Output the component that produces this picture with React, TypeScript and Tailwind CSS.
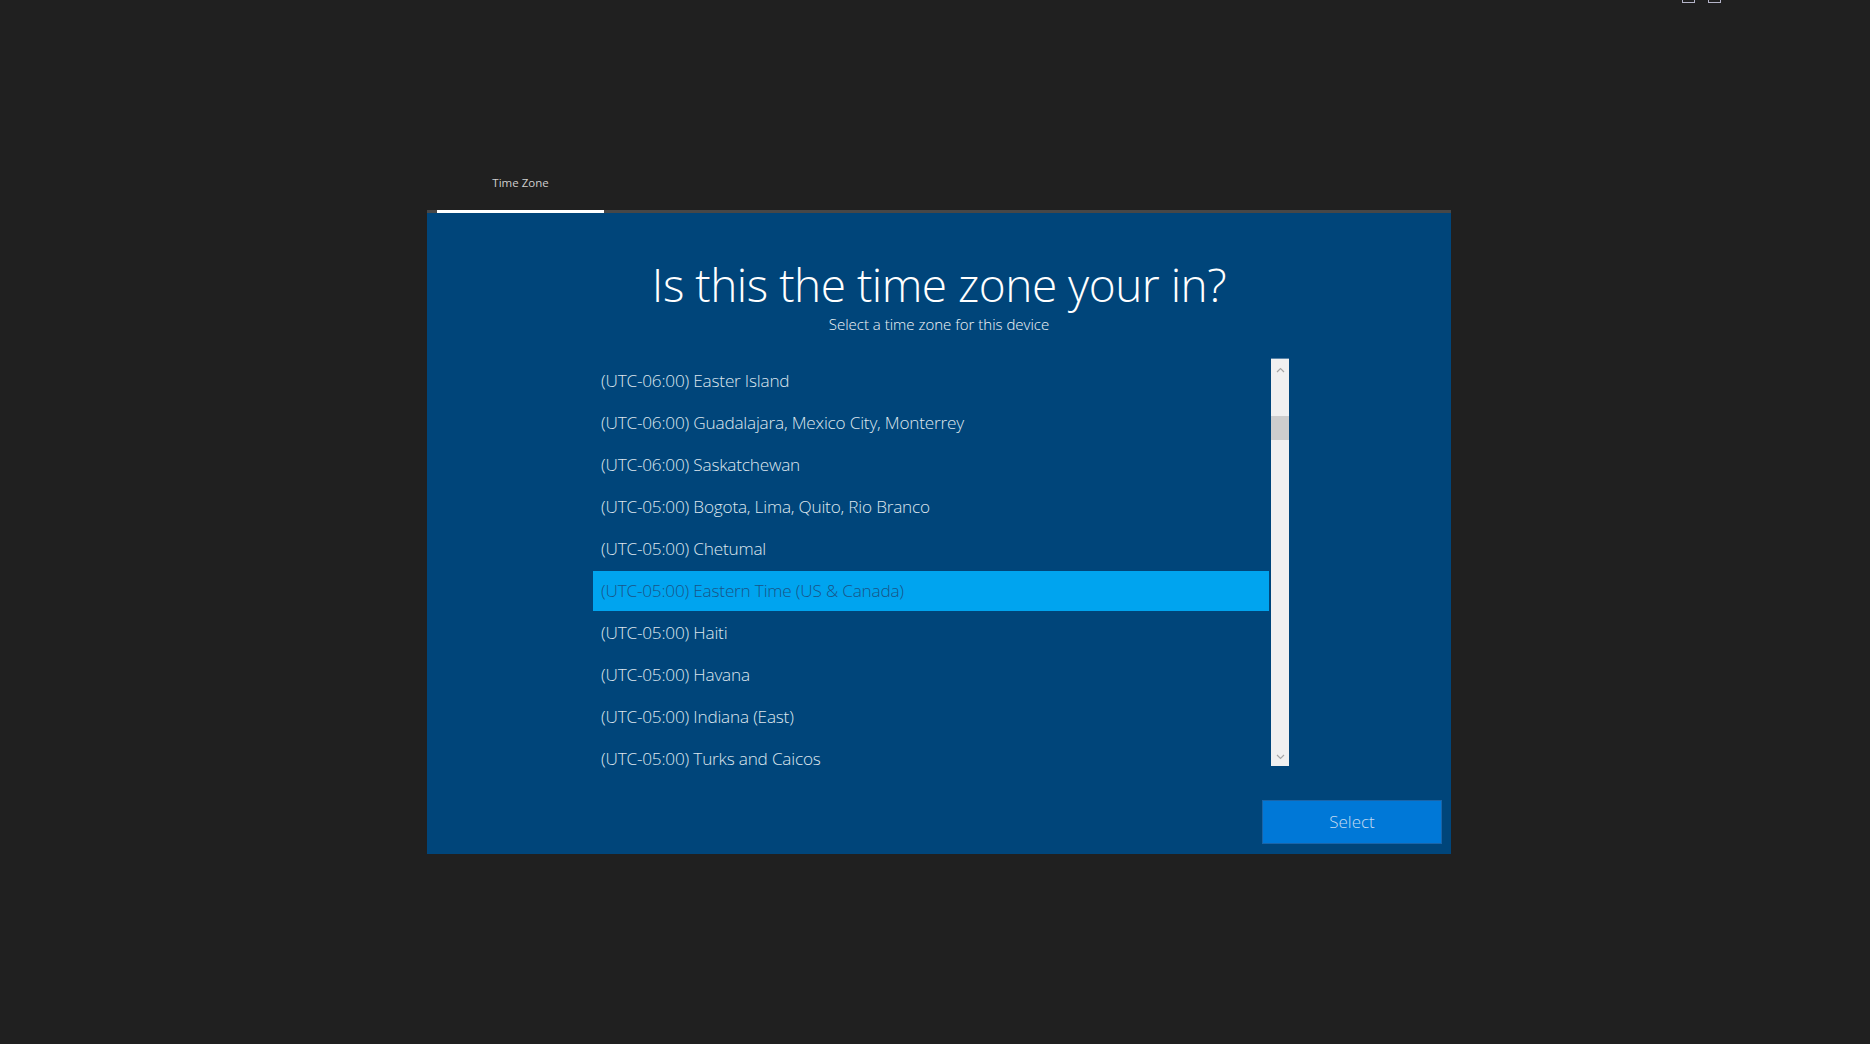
import React from 'react';

const ZONES = [
  '(UTC-06:00) Easter Island',
  '(UTC-06:00) Guadalajara, Mexico City, Monterrey',
  '(UTC-06:00) Saskatchewan',
  '(UTC-05:00) Bogota, Lima, Quito, Rio Branco',
  '(UTC-05:00) Chetumal',
  '(UTC-05:00) Eastern Time (US & Canada)',
  '(UTC-05:00) Haiti',
  '(UTC-05:00) Havana',
  '(UTC-05:00) Indiana (East)',
  '(UTC-05:00) Turks and Caicos',
];

const SELECTED = 5;

function Chevron({ up }: { up?: boolean }) {
  return (
    <svg width="9" height="6" viewBox="0 0 9 6" aria-hidden>
      <polyline
        points={up ? '1,5 4.5,1.5 8,5' : '1,1 4.5,4.5 8,1'}
        fill="none"
        stroke="#a6a6a6"
        strokeWidth="1.2"
      />
    </svg>
  );
}

function Scrollbar() {
  return (
    <div className="flex h-[408px] w-[18px] flex-col items-center border-t border-[#5b84a8] bg-[#f0f0f0]">
      <div className="flex h-[14px] items-end">
        <Chevron up />
      </div>
      <div className="mt-[43px] h-[24px] w-full bg-[#cdcdcd]" />
      <div className="mt-auto mb-[6px]">
        <Chevron />
      </div>
    </div>
  );
}

export default function App() {
  return (
    <div
      className="relative h-[1044px] w-full overflow-hidden bg-[#202020]"
      style={{ fontFamily: '"Open Sans", "Noto Sans", sans-serif' }}
    >
      <div className="absolute top-0 left-[1682px] flex gap-[13px]">
        <div className="h-[3px] w-[13px] border-x border-b border-[#b4b4c8]" />
        <div className="h-[3px] w-[13px] border-x border-b border-[#b4b4c8]" />
      </div>

      <div className="ml-[427px] w-[1024px] pt-[173px]">
        <div className="pl-[10px]">
          <div className="w-[167px] text-center text-[11.5px] leading-[20px] text-[#cfcfcf]">
            Time Zone
          </div>
        </div>
        <div className="mt-[17px] h-[3px] bg-[#474747] pl-[10px]">
          <div className="h-[3px] w-[167px] bg-white" />
        </div>

        <div className="flex h-[641px] flex-col bg-[#00457a]">
          <h1 className="mt-[43px] text-center text-[46px] leading-[56px] font-light tracking-[-0.5px] text-white">
            Is this the time zone your in?
          </h1>
          <p className="mt-[2px] text-center text-[15px] leading-[20px] font-light text-[#f2f5f8]">
            Select a time zone for this device
          </p>

          <div className="mt-[24px] flex items-start pl-[166px]">
            <div className="w-[676px] pt-[2px]">
              {ZONES.map((z, i) => (
                <div key={z} className="flex h-[42px] flex-col justify-center">
                  <div
                    className={
                      i === SELECTED
                        ? 'flex h-[40px] items-center bg-[#00a4ef] px-[8px] text-[#1a5488]'
                        : 'flex h-[40px] items-center px-[8px] text-[#dde5ee]'
                    }
                  >
                    <span className="text-[17.2px] font-light tracking-[-0.2px]">{z}</span>
                  </div>
                </div>
              ))}
            </div>
            <div className="ml-[2px]">
              <Scrollbar />
            </div>
          </div>

          <div className="mt-auto flex justify-end pr-[9px] pb-[10px]">
            <button className="h-[44px] w-[180px] border border-[#1a64a8] bg-[#0078d7] text-[17px] font-light text-[#c3dbf2]">
              Select
            </button>
          </div>
        </div>
      </div>
    </div>
  );
}
